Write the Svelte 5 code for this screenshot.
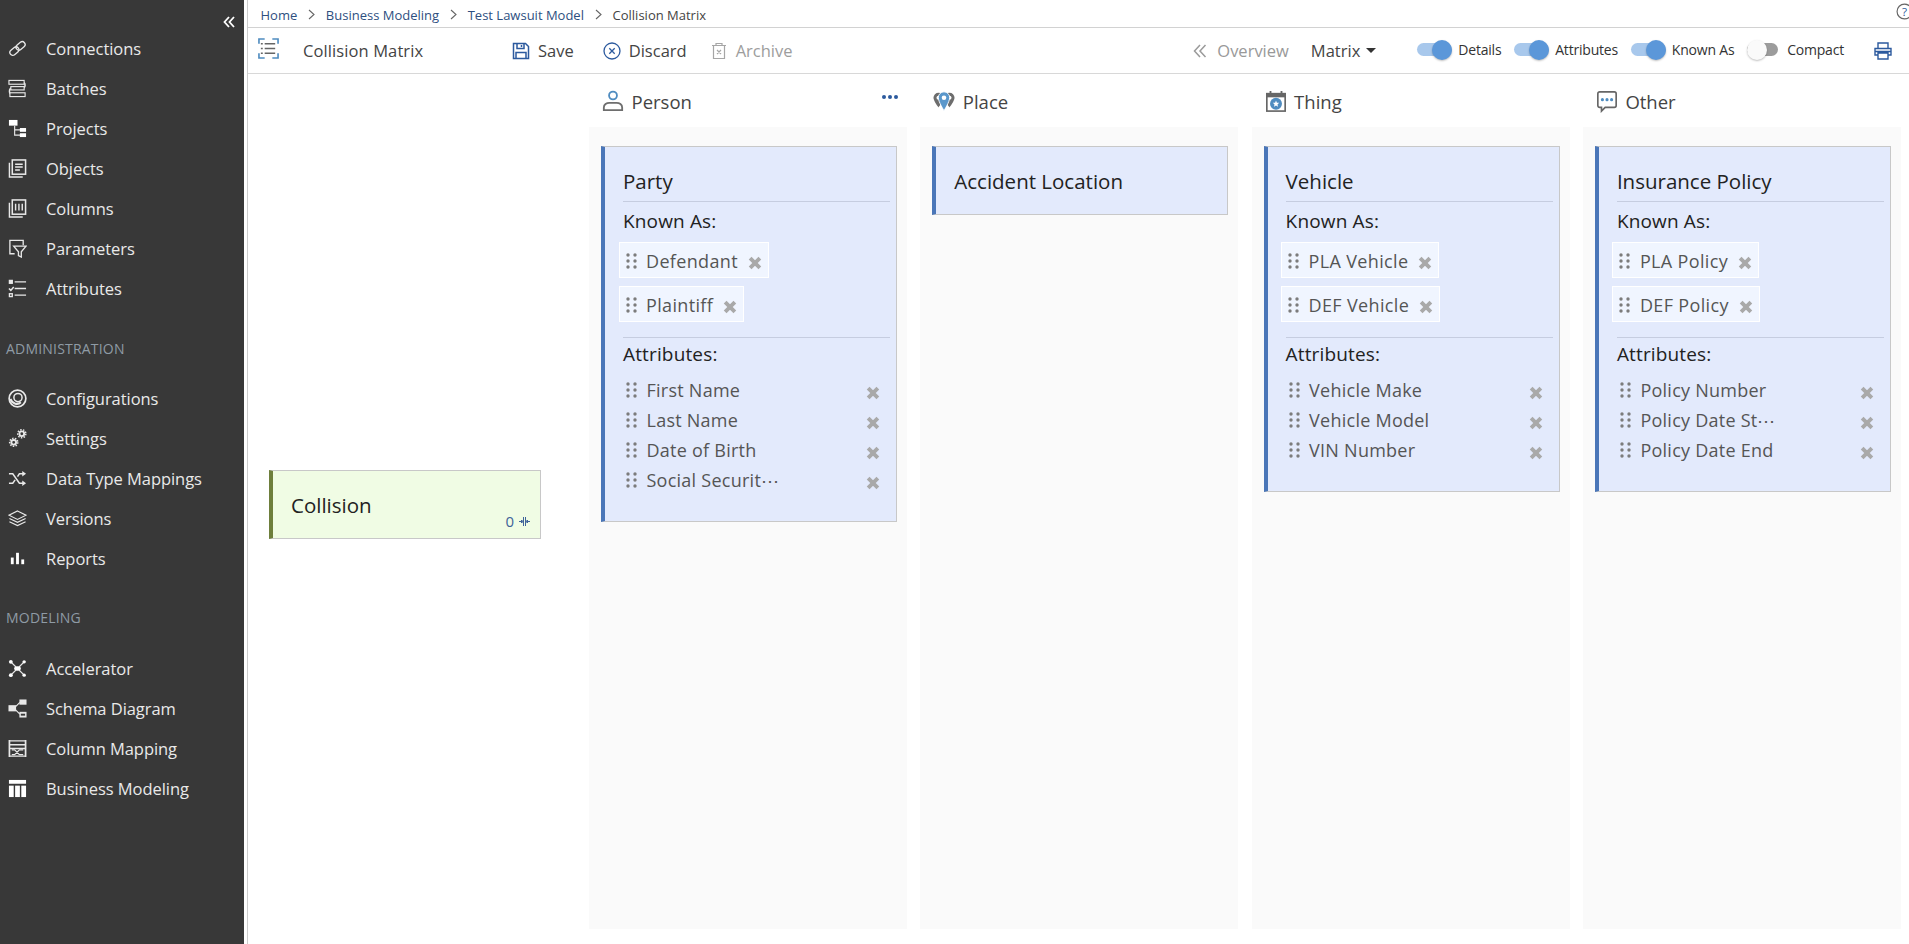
<script>
  const nav1 = ['Connections','Batches','Projects','Objects','Columns','Parameters','Attributes'];
  const nav2 = ['Configurations','Settings','Data Type Mappings','Versions','Reports'];
  const nav3 = ['Accelerator','Schema Diagram','Column Mapping','Business Modeling'];
  const cols = [
    { name:'Person', icon:'person', more:true, card:{ title:'Party', known:['Defendant','Plaintiff'], attrs:['First Name','Last Name','Date of Birth','Social Securit\u22ef'] } },
    { name:'Place', icon:'place', card:{ title:'Accident Location' } },
    { name:'Thing', icon:'thing', card:{ title:'Vehicle', known:['PLA Vehicle','DEF Vehicle'], attrs:['Vehicle Make','Vehicle Model','VIN Number'] } },
    { name:'Other', icon:'other', card:{ title:'Insurance Policy', known:['PLA Policy','DEF Policy'], attrs:['Policy Number','Policy Date St\u22ef','Policy Date End'] } }
  ];
  const toggles = [['Details',true],['Attributes',true],['Known As',true],['Compact',false]];
  const crumbs = ['Home','Business Modeling','Test Lawsuit Model'];
</script>

{#snippet navIcon(n)}
  <svg class="nicon" viewBox="0 0 20 20" fill="none" stroke="#e8e8e8" stroke-width="1.4">
    {#if n==='Connections'}
      <g transform="rotate(-40 10 10)"><rect x="0.5" y="7" width="10.500" height="6" rx="3"/><rect x="9" y="7" width="10.500" height="6" rx="3"/></g>
    {:else if n==='Batches'}
      <path d="M15 3.500c4 0 4 6 0 6H4.500c-4 0-4 7 0 7" stroke-width="1.500"/><rect x="1" y="1.500" width="16" height="4" fill="#383838" stroke="#e8e8e8" stroke-width="1.200"/><rect x="3" y="8" width="14" height="3.500" fill="#383838" stroke="#e8e8e8" stroke-width="1.200"/><rect x="2" y="14.500" width="16" height="4" fill="#383838" stroke="#e8e8e8" stroke-width="1.200"/>
    {:else if n==='Projects'}
      <rect x="1" y="1" width="9" height="6" fill="#fff" stroke="none"/><path d="M7 7v10h6M7 11.500h6" stroke-width="1.200"/><rect x="12.500" y="9.500" width="6.500" height="4" fill="#fff" stroke="none"/><rect x="12.500" y="15" width="6.500" height="4" fill="#fff" stroke="none"/>
    {:else if n==='Objects'}
      <rect x="4.500" y="1" width="14" height="15" stroke-width="1.600"/><path d="M1.500 4v15h14M7.500 5.500h8M7.500 8.500h8M7.500 11.500h5" stroke-width="1.500"/>
    {:else if n==='Columns'}
      <rect x="4.500" y="1" width="14" height="15" stroke-width="1.600"/><path d="M1.500 4v15h14M8 5v7M11.500 5v7M15 5v7" stroke-width="1.500"/>
    {:else if n==='Parameters'}
      <path d="M16 6.500V1.500H2v14h5"/><path d="M6 7.500h13l-5 6v5.500l-3-1.500v-4z"/>
    {:else if n==='Attributes'}
      <rect x="1.500" y="1.500" width="3" height="3" fill="#e8e8e8"/><path d="M7 3h12M7 10h12M7 17h12"/><path d="M1 10l2 2 3-3.500" stroke-width="1.600"/><rect x="1.500" y="15.500" width="3" height="3"/>
    {:else if n==='Configurations'}
      <circle cx="10" cy="10" r="8.800" stroke-width="1.800"/><circle cx="10.500" cy="9" r="4.300" stroke-width="1.600"/><path d="M2.500 10.500c2 5.500 8 6.500 11 3.500" stroke-width="2.200"/>
    {:else if n==='Settings'}
      <g stroke-width="2"><circle cx="6" cy="14" r="2.500"/><circle cx="14.500" cy="5" r="2.500"/></g><g stroke-dasharray="1.600 1.400" stroke-width="1.500"><circle cx="6" cy="14" r="4.300"/><circle cx="14.500" cy="5" r="4.300"/></g>
    {:else if n==='Data Type Mappings'}
      <path d="M1 5h4l7 10h4M1 15h4l2.500-3.500M10 8l2-3h4" stroke-width="1.600"/><path d="M15 2l4 3-4 3zM15 12l4 3-4 3z" fill="#e8e8e8" stroke="none"/>
    {:else if n==='Versions'}
      <path d="M10 2l9 4.500-9 4.500-9-4.500zM1.500 10l8.500 4 8.500-4M1.500 13.500l8.500 4 8.500-4" stroke-width="1.200"/>
    {:else if n==='Reports'}
      <g fill="#fff" stroke="none"><rect x="3" y="9" width="3" height="7"/><rect x="8.500" y="4" width="3" height="12"/><rect x="14" y="11" width="3" height="5"/></g>
    {:else if n==='Accelerator'}
      <path d="M3 3l7 7-7 7M17 3l-7 7 7 7" stroke-width="1.400"/><g fill="#fff" stroke="none"><circle cx="3" cy="3" r="2"/><circle cx="17" cy="3" r="1.800"/><circle cx="3" cy="17" r="2"/><circle cx="17" cy="17" r="1.800"/><ellipse cx="10" cy="10" rx="3.500" ry="2.300"/></g>
    {:else if n==='Schema Diagram'}
      <rect x="0.500" y="6.500" width="8" height="6.500" fill="#e8e8e8" stroke="none"/><rect x="12" y="0.500" width="7.500" height="5.500" fill="#e8e8e8" stroke="none"/><rect x="12" y="13.500" width="7.500" height="6" fill="#e8e8e8" stroke="none"/><rect x="13.500" y="15.500" width="4.500" height="2" fill="#383838" stroke="none"/><path d="M8 8l4.500-4.500M8 11.500l4.500 4.500" stroke-width="1.200"/>
    {:else if n==='Column Mapping'}
      <path d="M1.500 1v18M18.500 1v18" stroke-width="1.800"/><path d="M1.500 2h17M1.500 6h17M1.500 18h17M1.500 10h17" stroke-width="1.500"/><path d="M4 11.500h3l5 5h4M4 16.500h3l5-5h4" stroke-width="1.200"/>
    {:else}
      <rect x="1" y="1" width="18" height="4" fill="#fff" stroke="none"/><g fill="#fff" stroke="none"><rect x="1" y="7" width="5" height="12"/><rect x="7.500" y="7" width="5" height="12"/><rect x="14" y="7" width="5" height="12"/></g>
    {/if}
  </svg>
{/snippet}

{#snippet nav(list)}
  {#each list as n}
    <div class="nitem">{@render navIcon(n)}<span>{n}</span></div>
  {/each}
{/snippet}

{#snippet grip()}
  <svg class="grip" viewBox="0 0 11 16" fill="#7c7c7c"><circle cx="2" cy="2" r="1.700"/><circle cx="9" cy="2" r="1.700"/><circle cx="2" cy="8" r="1.700"/><circle cx="9" cy="8" r="1.700"/><circle cx="2" cy="14" r="1.700"/><circle cx="9" cy="14" r="1.700"/></svg>
{/snippet}

{#snippet x()}
  <svg class="xic" viewBox="0 0 13 13"><path d="M2 2l9 9M11 2l-9 9" stroke="#a9a9a9" stroke-width="3.600"/></svg>
{/snippet}

{#snippet sep()}
  <svg class="sep" viewBox="0 0 7 11" fill="none" stroke="#666" stroke-width="1.100"><path d="M1 1l5 4.500-5 4.500"/></svg>
{/snippet}

{#snippet colIcon(i)}
  <svg class="cicon" viewBox="0 0 24 24" fill="none">
    {#if i==='person'}
      <circle cx="12" cy="6" r="4.300" stroke="#4f8cc0" stroke-width="2"/><path d="M2 22v-3c0-3 3-5 6-5h8c3 0 6 2 6 5v3z" stroke="#6e6e6e" stroke-width="2"/>
    {:else if i==='place'}
      <path d="M6 3a5.500 5.500 0 0 0-5.500 5.500C.5 12 6 19 6 19s5.500-7 5.500-10.500A5.500 5.500 0 0 0 6 3z" fill="#6d6d6d"/><circle cx="6" cy="8.500" r="2.200" fill="#fff"/><path d="M18 3a5.500 5.500 0 0 0-5.500 5.500C12.500 12 18 19 18 19s5.500-7 5.500-10.500A5.500 5.500 0 0 0 18 3z" fill="#6d6d6d"/><circle cx="18" cy="8.500" r="2.200" fill="#fff"/><path d="M12 2a6.200 6.200 0 0 1 6.200 6.200C18.200 13 12 22.500 12 22.500S5.800 13 5.800 8.200A6.200 6.200 0 0 1 12 2z" fill="#5a97cb" stroke="#fff" stroke-width="1"/><circle cx="12" cy="8.500" r="2.500" fill="#fff"/>
    {:else if i==='thing'}
      <rect x="2" y="4" width="20" height="19" stroke="#666" stroke-width="1.800"/><path d="M2 4h20v4H2z" fill="#666"/><path d="M6 1v5M18 1v5" stroke="#666" stroke-width="2"/><circle cx="12" cy="15" r="6.500" fill="#4f8cc0"/><path d="M12 11.500l1 2.300 2.500.2-1.900 1.700.6 2.500-2.200-1.300-2.200 1.300.6-2.500-1.900-1.700 2.500-.2z" fill="#fff"/>
    {:else}
      <path d="M4 2h16a2 2 0 0 1 2 2v13a2 2 0 0 1-2 2H10l-4 4v-4H4a2 2 0 0 1-2-2V4a2 2 0 0 1 2-2z" stroke="#666" stroke-width="1.800"/><circle cx="7" cy="10.500" r="1.700" fill="#4f8cc0"/><circle cx="12" cy="10.500" r="1.700" fill="#4f8cc0"/><circle cx="17" cy="10.500" r="1.700" fill="#4f8cc0"/>
    {/if}
  </svg>
{/snippet}

<div class="app">
  <aside class="side">
    <div class="collapse"><svg width="12" height="12" viewBox="0 0 12 12" fill="none" stroke="#fff" stroke-width="1.800"><path d="M6 1L1.500 6 6 11M11 1L6.500 6 11 11"/></svg></div>
    <div class="group first">{@render nav(nav1)}</div>
    <div class="head adm">ADMINISTRATION</div>
    <div class="group">{@render nav(nav2)}</div>
    <div class="head mod">MODELING</div>
    <div class="group">{@render nav(nav3)}</div>
  </aside>
  <main class="main">
    <div class="crumbs">
      {#each crumbs as c}<a href="#a">{c}</a>{@render sep()}{/each}<span>Collision Matrix</span>
      <svg class="help" viewBox="0 0 16 16" fill="none"><circle cx="8" cy="8" r="7" stroke="#666" stroke-width="1.100"/><text x="8" y="11.800" text-anchor="middle" font-size="11" fill="#2b5a9a" font-family="Open Sans">?</text></svg>
    </div>
    <div class="tools">
      <svg class="tic" viewBox="0 0 22 22" fill="none"><path d="M1 6V1h6M15 1h6v5M1 16v5h6M15 21h6v-5" stroke="#4f8cc0" stroke-width="1.700"/><path d="M7 6h11M7 11h11M7 16h11M3 6h2M3 11h2M3 16h2" stroke="#666" stroke-width="1.700"/></svg>
      <span class="title">Collision Matrix</span>
      <div class="btn save"><svg class="bic" viewBox="0 0 18 18" fill="none" stroke="#2c5a9e" stroke-width="1.500"><path d="M1.500 1.500h12l3 3v12h-15z"/><path d="M5 1.500v5h7v-5M9.500 3v2M4 16.500v-6h10v6"/></svg>Save</div>
      <div class="btn disc"><svg class="bic" viewBox="0 0 18 18" fill="none" stroke="#2c5a9e" stroke-width="1.300"><circle cx="9" cy="9" r="8"/><path d="M6.300 6.300l5.400 5.400M11.700 6.300l-5.400 5.400"/></svg>Discard</div>
      <div class="btn arch"><svg class="bic" viewBox="0 0 18 18" fill="none" stroke="#a6a6a6" stroke-width="1.200"><path d="M2 3.500h14M6 3.500V1.500h6v2M3.500 3.500v13h11v-13M7 8l4 4M11 8l-4 4"/></svg>Archive</div>
      <div class="spacer"></div>
      <div class="btn over"><svg class="chev" viewBox="0 0 14 14" fill="none" stroke="#9a9a9a" stroke-width="1.500"><path d="M7 1L1.500 7 7 13M12.500 1L7 7l5.500 6"/></svg>Overview</div>
      <div class="btn matrix">Matrix<b class="caret"></b></div>
      <div class="togs">
        {#each toggles as [l,on]}
          <div class="tog" class:on><span class="track"><span class="knob"></span></span><span class="tl">{l}</span></div>
        {/each}
      </div>
      <svg class="print" viewBox="0 0 18 18" fill="none" stroke="#2c5a9e" stroke-width="1.400"><path d="M4 6V1h10v5M4 13H1V6.500h16V13h-3M1 9.500h16M4 11h10v6H4z"/></svg>
    </div>
    <div class="board">
      <div class="left">
        <div class="ccard"><span class="ctitle">Collision</span><span class="count">0 <svg width="11" height="11" viewBox="0 0 11 11" fill="none" stroke="#3f6399" stroke-width="1"><path d="M4.500 1v9M6.500 1v9M0 5.500h3M8 5.500h3"/><path d="M2.500 4v3L4 5.500zM8.500 4v3L7 5.500z" fill="#3f6399"/></svg></span></div>
      </div>
      {#each cols as c}
        <section class="col">
          <header class="chead">
            {@render colIcon(c.icon)}<span>{c.name}</span>
            {#if c.more}<b class="more"><i></i><i></i><i></i></b>{/if}
          </header>
          <div class="cbody">
            <div class="card">
              <div class="ttl">{c.card.title}</div>
              {#if c.card.known}
                <div class="sec">
                  <div class="lbl">Known As:</div>
                  {#each c.card.known as k}
                    <div class="chipw"><div class="chip">{@render grip()}<span>{k}</span>{@render x()}</div></div>
                  {/each}
                </div>
                <div class="sec attrs">
                  <div class="lbl">Attributes:</div>
                  {#each c.card.attrs as a}
                    <div class="attr">{@render grip()}<span>{a}</span>{@render x()}</div>
                  {/each}
                </div>
              {/if}
            </div>
          </div>
        </section>
      {/each}
    </div>
  </main>
</div>

<style>
  :global(body){margin:0;background:#fff;font-family:"Open Sans","Noto Sans",sans-serif;color:#333}
  .app{display:flex;height:944px;width:1909px;overflow:hidden}
  .side{width:244px;flex:none;background:#383838;color:#e9e9e9;font-size:16.5px;letter-spacing:-.05px}
  .collapse{height:28px;display:flex;justify-content:flex-end;align-items:flex-end;padding-right:9px;box-sizing:border-box}
  .group{display:flex;flex-direction:column}
  .nitem{height:40px;display:flex;align-items:center;padding-left:8px}
  .nitem span{margin-left:19px}
  .nicon{width:19px;height:19px;flex:none}
  .head{font-size:14px;color:#8f9ba5;padding-left:6px;letter-spacing:.2px}
  .adm{margin-top:31px;height:39px;line-height:20px}
  .mod{margin-top:30px;height:40px;line-height:20px}
  .main{margin-left:3px;flex:1;border-left:1px solid #ccc;min-width:0;display:flex;flex-direction:column}
  .crumbs{height:27px;padding-top:2px;box-sizing:border-box;display:flex;align-items:center;padding-left:12.500px;font-size:13px;color:#444;position:relative;box-shadow:0 1px 0 #d2d2d2;margin-bottom:1px}
  .crumbs a{color:#2e4f7f;text-decoration:none}
  .sep{width:7px;height:11px;margin:0 10.800px;flex:none}
  .help{position:absolute;right:-4px;top:3px;width:17px;height:17px}
  .tools{height:45px;border-bottom:1px solid #d8d8d8;display:flex;align-items:center;font-size:16.5px}
  .tic{width:21px;height:21px;margin-left:10px;margin-top:-5px;flex:none}
  .title{margin-left:24px;width:209px;color:#444;flex:none;letter-spacing:.1px}
  .btn{display:flex;align-items:center;color:#444}
  .bic{width:18px;height:18px;margin-right:8px}
  .save{margin-right:29px}
  .disc{margin-right:23px}
  .arch{color:#9d9d9d}
  .spacer{flex:1}
  .over{color:#999;margin-right:22px}
  .chev{width:14px;height:14px;margin-right:10px}
  .caret{display:inline-block;border:5.500px solid transparent;border-top-color:#333;border-bottom:0;margin-left:6px}
  .togs{display:flex;margin-left:41px;font-size:14px;letter-spacing:-.2px;margin-top:-2px}
  .tog{display:flex;align-items:center;margin-right:12.800px}
  .track{width:35px;height:13px;border-radius:7px;background:#a8c8ec;position:relative;margin-right:6px;display:block}
  .knob{position:absolute;width:20px;height:20px;border-radius:50%;background:#5b97d9;right:0;top:-3.500px;box-shadow:0 1px 2px rgba(0,0,0,.25)}
  .tog:not(.on) .track{background:#9c9c9c;width:31px;margin-right:9px}
  .tog:not(.on) .knob{background:#fafafa;left:0;right:auto}
  .tog:last-child{margin-right:0}
  .print{width:18px;height:18px;margin-left:30px;margin-right:17px;flex:none}
  .board{flex:1;display:flex;min-height:0}
  .left{width:341px;flex:none;padding:396px 0 0 21px;box-sizing:border-box}
  .ccard{width:272px;height:69px;box-sizing:border-box;background:#f0fce4;border:1px solid #c8c8c8;border-left:4px solid #6e7f3c;padding-left:18px;line-height:68px;position:relative;font-size:20.5px;color:#222}
  .count{position:absolute;right:10px;bottom:9px;line-height:16px;font-size:15px;color:#3f6399;display:flex;align-items:center;gap:5px}
  .col{width:318px;flex:none;margin-right:13.300px;display:flex;flex-direction:column}
  .chead{height:53px;padding-top:1px;display:flex;align-items:center;font-size:18.5px;color:#444;padding-left:13px;position:relative;box-sizing:border-box}
  .cicon{width:22px;height:24px;margin-right:7.500px}
  .more{position:absolute;right:9px;top:21px;display:flex;gap:2px}
  .more i{width:4px;height:4px;border-radius:50%;background:#2c5a9e}
  .cbody{height:802px;background:#fafafa;padding:19px 10px 0 12px;box-sizing:border-box}
  .card{background:#e3eafc;border:1px solid #c8c8c8;border-left:4px solid #4a76b8;padding:0 6px 0 18px;box-sizing:border-box;min-height:69px;color:#333}
  .ttl{height:54px;padding-top:17px;box-sizing:border-box;line-height:34px;font-size:20.5px;color:#222}
  .sec{border-top:1px solid #c6cde0}
  .lbl{font-size:19px;letter-spacing:.15px;color:#222;line-height:38px;height:40px}
  .chipw{display:flex;margin-left:-4.500px;margin-bottom:8px}
  .chip{height:36px;box-sizing:border-box;border:1px solid #fff;background:#f0f5ff;display:flex;align-items:center;padding:0 6px 0 6px;font-size:18px;letter-spacing:.35px;color:#555}
  .chip span{margin:1px 10px 0 9.500px}
  .grip{width:11px;height:16px;flex:none;margin-top:1px}
  .xic{width:14px;height:14px;flex:none;margin-top:5px}
  .attrs{margin-top:15px;padding-bottom:26px}
  .attrs .lbl{height:37px;line-height:32px}
  .attr{height:30px;display:flex;align-items:center;font-size:18px;letter-spacing:.25px;color:#555;padding-left:3px}
  .attr span{margin-left:9.500px;flex:1;white-space:nowrap}
  .attr .grip{margin-top:-1px}
  .attr .xic{margin-right:10px;margin-top:6px}
</style>
